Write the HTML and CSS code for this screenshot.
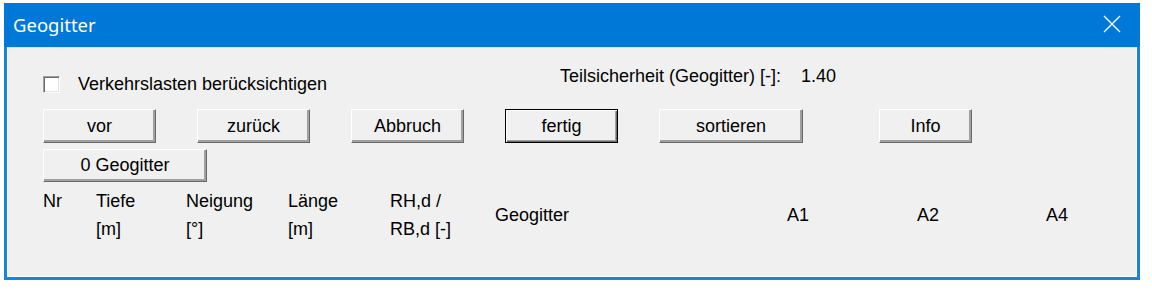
FILE: index.html
```html
<!DOCTYPE html>
<html lang="de">
<head>
<meta charset="utf-8">
<title>Geogitter</title>
<link rel="stylesheet" href="styles.css">
</head>
<body>
<div class="window">
  <div class="titlebar">
    <span class="title">Geogitter</span>
    <svg class="close" width="18" height="18" viewBox="0 0 18 18"><path d="M1 1 L17 17 M17 1 L1 17" stroke="#fff" stroke-width="1.4" fill="none"/></svg>
  </div>
  <div class="client">
    <div class="row-top">
      <label class="check"><span class="box"></span><span>Verkehrslasten berücksichtigen</span></label>
      <div class="safety"><span>Teilsicherheit (Geogitter) [-]:</span><span class="val">1.40</span></div>
    </div>
    <div class="buttons">
      <button class="btn">vor</button>
      <button class="btn">zurück</button>
      <button class="btn">Abbruch</button>
      <button class="btn btn-default">fertig</button>
      <button class="btn btn-wide">sortieren</button>
      <button class="btn btn-info">Info</button>
    </div>
    <div class="buttons2">
      <button class="btn btn-count">0 Geogitter</button>
    </div>
    <div class="head">
      <div class="c">Nr</div>
      <div class="c">Tiefe<br>[m]</div>
      <div class="c">Neigung<br>[°]</div>
      <div class="c">Länge<br>[m]</div>
      <div class="c">RH,d /<br>RB,d [-]</div>
      <div class="c mid">Geogitter</div>
      <div class="c mid">A1</div>
      <div class="c mid">A2</div>
      <div class="c mid">A4</div>
    </div>
  </div>
</div>
</body>
</html>
```

FILE: styles.css
```css
html, body {
  margin: 0;
  padding: 0;
  background: #ffffff;
}
body {
  padding: 3px 0 0 4px;
}
.window {
  width: 1136px;
  box-sizing: border-box;
  background: #1a84d8;
  padding: 0 3px 3px 3px;
  display: flex;
  flex-direction: column;
}
.titlebar {
  height: 44px;
  background: #0078d7;
  margin: 0 -3px;
  display: flex;
  align-items: center;
  justify-content: space-between;
  padding: 0 19px 2px 9px;
  box-sizing: border-box;
}
.title {
  font-family: "Noto Sans", "Open Sans", sans-serif;
  font-size: 18.5px;
  color: #ffffff;
}
.close {
  display: block;
}
.client {
  height: 230px;
  box-sizing: border-box;
  background: #f0f0f0;
  border: 1px solid #fbfbfb;
  border-top: 1px solid #cfe3f6;
  font-family: "Liberation Sans", Arial, sans-serif;
  font-size: 18px;
  line-height: 22px;
  color: #000000;
}
.row-top {
  display: flex;
  align-items: flex-start;
  padding: 17px 0 0 35px;
  height: 46px;
  box-sizing: border-box;
}
.check {
  display: flex;
  align-items: center;
  width: 517px;
  margin-top: 8px;
}
.box {
  width: 15px;
  height: 15px;
  background: #ffffff;
  border-top: 1px solid #a0a0a0;
  border-left: 1px solid #a0a0a0;
  border-right: 1px solid #ffffff;
  border-bottom: 1px solid #ffffff;
  box-shadow: inset 1px 1px #696969, inset -1px -1px #e3e3e3;
  margin-right: 18px;
  margin-top: 1px;
}
.safety {
  display: flex;
  gap: 20px;
}
.buttons, .buttons2 {
  display: flex;
  padding-left: 35px;
}
.buttons {
  gap: 41px;
  margin-top: 15px;
}
.buttons2 {
  margin-top: 6px;
}
.btn {
  font-family: "Liberation Sans", Arial, sans-serif;
  font-size: 18px;
  color: #000;
  background: #f0f0f0;
  width: 113px;
  height: 34px;
  padding: 0;
  border-top: 1px solid #ffffff;
  border-left: 1px solid #ffffff;
  border-right: 1px solid #696969;
  border-bottom: 1px solid #696969;
  box-shadow: inset -1px -1px #a0a0a0, inset -2px -2px #a0a0a0;
  border-radius: 0;
}
.btn-default {
  border: 1px solid #000000;
  box-shadow: inset 1px 1px #ffffff, inset -1px -1px #696969, inset -2px -2px #a0a0a0;
}
.btn-wide {
  width: 144px;
}
.btn-info {
  width: 93px;
  margin-left: 35px;
}
.btn-count {
  width: 164px;
  height: 33px;
}
.head {
  display: grid;
  grid-template-columns: 53px 90px 102px 102px 105px 292px 130px 129px auto;
  padding-left: 35px;
  margin-top: 5px;
  line-height: 28px;
}
.mid {
  align-self: center;
  line-height: 22px;
}
```
